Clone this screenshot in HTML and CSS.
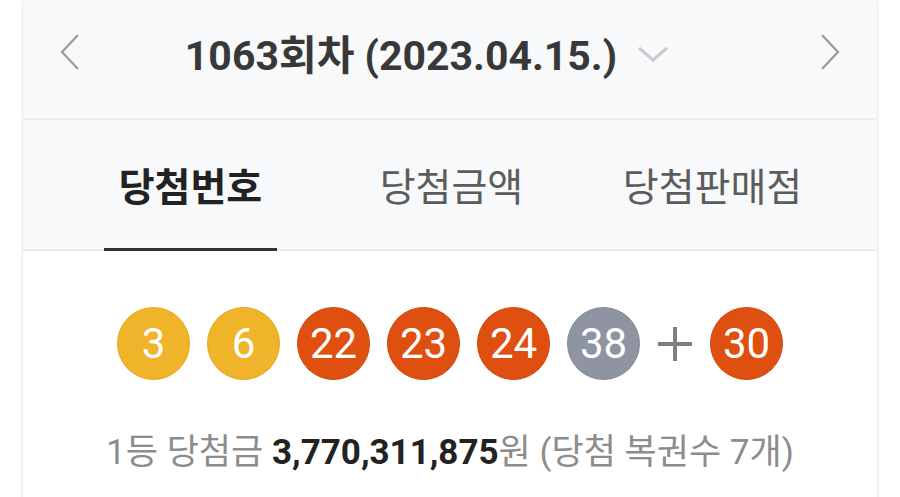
FILE: index.html
```html
<!DOCTYPE html>
<html lang="ko">
  <head>
    <meta charset="UTF-8" />
    <meta name="viewport" content="width=device-width, initial-scale=1.0" />
    <title>로또 당첨번호</title>
    <link rel="stylesheet" href="styles.css">
  </head>
  <body>
    <div class="result-card">
      <!-- 회차 선택 -->
      <div class="round-bar">
        <button class="round-arrow" aria-label="이전 회차">
          <svg width="22" height="38" viewBox="0 0 22 38">
            <path d="M19 2 L3 19 L19 36" fill="none" stroke="#9a9a9a" stroke-width="2.2" />
          </svg>
        </button>
        <div class="round-title">
          <span>1063회차 (2023.04.15.)</span>
          <svg class="round-dropdown" width="32" height="18" viewBox="0 0 32 18">
            <path d="M2 3 L16 15 L30 3" fill="none" stroke="#c9cacd" stroke-width="3" />
          </svg>
        </div>
        <button class="round-arrow" aria-label="다음 회차">
          <svg width="22" height="38" viewBox="0 0 22 38">
            <path d="M3 2 L19 19 L3 36" fill="none" stroke="#9a9a9a" stroke-width="2.2" />
          </svg>
        </button>
      </div>

      <!-- 탭 -->
      <div class="tabs">
        <a href="#" class="tab active"><span>당첨번호</span></a>
        <a href="#" class="tab"><span>당첨금액</span></a>
        <a href="#" class="tab"><span>당첨판매점</span></a>
      </div>

      <!-- 당첨번호 -->
      <div class="result-body">
        <div class="balls">
          <span class="ball yellow">3</span>
          <span class="ball yellow">6</span>
          <span class="ball red">22</span>
          <span class="ball red">23</span>
          <span class="ball red">24</span>
          <span class="ball gray">38</span>
          <span class="plus">
            <svg width="40" height="40" viewBox="0 0 40 40">
              <path d="M20 3 V37 M3 20 H37" stroke="#7d7f84" stroke-width="4" />
            </svg>
          </span>
          <span class="ball red">30</span>
        </div>
        <p class="prize">
          1등 당첨금 <b>3,770,311,875</b>원 (당첨 복권수 7개)
        </p>
      </div>
    </div>
  </body>
</html>
```

FILE: styles.css
```css
/* ======= Переменные ======= */
:root {
  --font-family: Roboto, "Noto Sans CJK KR", sans-serif;
  --color-page: #ffffff;
  --color-head-bg: #f8f9fb;
  --color-line: #eaecef;
  --color-text: #383838;
  --color-text-strong: #222;
  --color-text-muted: #8c8c8c;
  --color-tab: #5c5c5c;
  --ball-yellow: #f0b42a;
  --ball-red: #de4f10;
  --ball-gray: #8e94a2;
}

* {
  box-sizing: border-box;
  margin: 0;
  padding: 0;
}

body {
  font-family: var(--font-family);
  background-color: var(--color-page);
  overflow: hidden;
}

/* ======= Карточка ======= */
.result-card {
  margin: -10px 22px 0;
  border: 1px solid var(--color-line);
  border-radius: 18px 18px 0 0;
  box-shadow: 0 0 4px rgba(0, 0, 0, 0.06);
  background-color: var(--color-page);
  overflow: hidden;
}

/* ======= Выбор тиража ======= */
.round-bar {
  display: flex;
  align-items: center;
  height: 129px;
  padding: 0 36px 6px;
  background-color: var(--color-head-bg);
  border-bottom: 2px solid var(--color-line);
}

.round-arrow {
  display: flex;
  border: none;
  background: none;
  cursor: pointer;
}

.round-title {
  flex: 1;
  display: flex;
  align-items: center;
  justify-content: center;
  gap: 20px;
  padding-right: 46px;
  font-size: 41px;
  font-weight: bold;
  color: var(--color-text);
}

.round-dropdown {
  margin-top: 4px;
}

/* ======= Вкладки ======= */
.tabs {
  display: flex;
  height: 131px;
  padding: 0 34px 0 37px;
  background-color: var(--color-head-bg);
  border-bottom: 2px solid var(--color-line);
}

.tab {
  flex: 1;
  display: flex;
  justify-content: center;
  margin-bottom: -2px;
  font-size: 39px;
  color: var(--color-tab);
  text-decoration: none;
}

.tab span {
  display: flex;
  align-items: center;
  padding: 0 15px;
  border-bottom: 3px solid transparent;
}

.tab.active {
  font-weight: bold;
  color: var(--color-text-strong);
}

.tab.active span {
  border-bottom-color: #333;
}

/* ======= Номера ======= */
.result-body {
  padding: 56px 0 40px;
}

.balls {
  display: flex;
  justify-content: center;
  align-items: center;
  gap: 17px;
}

.ball {
  width: 73px;
  height: 73px;
  border-radius: 50%;
  display: flex;
  align-items: center;
  justify-content: center;
  font-size: 42px;
  color: #fff;
}

.ball.yellow {
  background-color: var(--ball-yellow);
  border: 1px solid #e2a824;
}

.ball.red {
  background-color: var(--ball-red);
  border: 1px solid #cf470c;
}

.ball.gray {
  background-color: var(--ball-gray);
  border: 1px solid #838998;
}

.plus {
  display: flex;
  margin: 0 -2px;
}

.prize {
  margin-top: 52px;
  text-align: center;
  font-size: 35px;
  line-height: 42px;
  color: var(--color-text-muted);
}

.prize b {
  color: var(--color-text-strong);
}
```
